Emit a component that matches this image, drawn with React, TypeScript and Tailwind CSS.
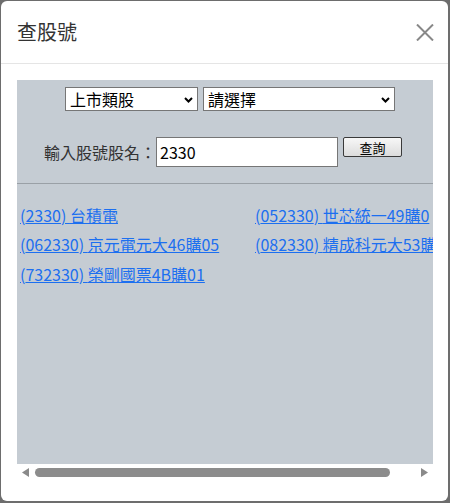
const CJK = "font-['Noto_Sans_CJK_TC','Noto_Sans',sans-serif]";

const results = [
  ["2330", "台積電"],
  ["052330", "世芯統一49購0"],
  ["062330", "京元電元大46購05"],
  ["082330", "精成科元大53購05"],
  ["732330", "榮剛國票4B購01"],
];

function Chevron() {
  return (
    <svg width="9" height="6" viewBox="0 0 9 6" className="pointer-events-none absolute right-[4px] top-[9px]">
      <path d="M1 1 L4.5 4.5 L8 1" fill="none" stroke="#000" strokeWidth="2" />
    </svg>
  );
}

function FakeSelect({ label, width }: { label: string; width: string }) {
  return (
    <div className={`relative h-[24px] ${width} border border-[#767676] bg-white text-left`}>
      <span className="block pl-[4px] text-[16px] leading-[22px] text-black">{label}</span>
      <Chevron />
    </div>
  );
}

export default function App() {
  return (
    <div className={`h-[503px] w-[450px] bg-[#6d6d6d] pl-px pt-px pr-[2px] pb-[2px] ${CJK}`}>
      <div className="flex h-full w-full flex-col rounded-[6px] bg-white">
        <header className="flex h-[63px] shrink-0 items-center justify-between border-b border-[#e5e5e5] pl-[16px] pr-[14px]">
          <h4 className="text-[20px] leading-none text-[#333]">查股號</h4>
          <button className="mt-px">
            <svg width="18" height="17" viewBox="0 0 18 17">
              <path d="M1 0.5 L17 16.5 M17 0.5 L1 16.5" stroke="#888" strokeWidth="2" />
            </svg>
          </button>
        </header>

        <div className="pl-[16px] pt-[16px]">
          <div className="h-[384px] w-[416px] overflow-hidden bg-[#c5ccd3]">
            <div className="flex justify-center gap-[5px] pl-[10px] pt-[7px]">
              <FakeSelect label="上市類股" width="w-[133px]" />
              <FakeSelect label="請選擇" width="w-[192px]" />
            </div>

            <div className="mt-[26px] flex items-start justify-center pr-[4px]">
              <span className="mt-[5px] text-[16px] leading-[20px] text-[#333]">輸入股號股名：</span>
              <div className="h-[30px] w-[182px] border border-[#767676] bg-white pl-[3px] text-[16px] leading-[28px] text-black">
                2330
              </div>
              <button className="ml-[5px] h-[20px] w-[59px] rounded-[2px] border border-[#3a3a3a] bg-gradient-to-b from-[#f7f7f7] to-[#dcdcdc] text-[13px] leading-[17px] text-black">
                查詢
              </button>
            </div>

            <hr className="mt-[16px] border-t border-[#9aa0a6]" />

            <div className="mt-[16px] grid w-[480px] grid-cols-[235px_235px] auto-rows-[29.5px] items-center pl-[3px]">
              {results.map(([code, name]) => (
                <a
                  key={code}
                  href="#"
                  className="whitespace-nowrap text-[16px] leading-[20px] text-[#1c6ff0] underline"
                >
                  ({code}) {name}
                </a>
              ))}
            </div>
          </div>

          <div className="flex h-[17px] w-[416px] items-center">
            <svg width="8" height="9" viewBox="0 0 8 9" className="ml-[5px]">
              <path d="M7 0 L0 4.5 L7 9 Z" fill="#8a8a8a" />
            </svg>
            <div className="ml-[5px] h-[9px] w-[355px] rounded-full bg-[#8c8c8c]" />
            <svg width="8" height="9" viewBox="0 0 8 9" className="ml-auto mr-[4px]">
              <path d="M0 0 L7 4.5 L0 9 Z" fill="#8a8a8a" />
            </svg>
          </div>
        </div>
      </div>
    </div>
  );
}
